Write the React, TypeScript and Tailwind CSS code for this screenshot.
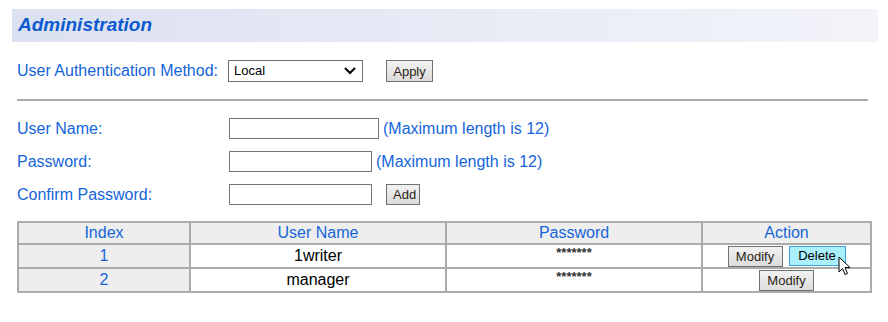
import React from 'react';

const users = [
  { index: 1, name: '1writer' },
  { index: 2, name: 'manager' },
];

const btn =
  'h-[21px] px-[6px] text-[13px] leading-none text-[#2a2416] bg-gradient-to-b from-[#f2f2f2] to-[#dcdcdc] border border-[#707070]';

const Cursor: React.FC = () => (
  <svg width="14" height="21" viewBox="0 0 14 21" className="absolute left-[49px] top-[10px]">
    <path
      d="M1 1 L1 16 L4.5 12.5 L7 18.5 L9.5 17.5 L7 11.5 L12 11.5 Z"
      fill="#fff"
      stroke="#000"
      strokeWidth="1"
      strokeLinejoin="round"
    />
  </svg>
);

const cell = 'border-r-2 border-b-2 border-[#ababab] p-0';

export default function App() {
  return (
    <div className="w-[888px] h-[322px] bg-white pt-[9px] font-['Liberation_Sans',Arial,sans-serif] text-[#1565d8]">
      <div className="ml-[12px] w-[866px] h-[33px] flex items-center pl-[6px] bg-gradient-to-r from-[#dce1f1] to-[#f3f4fa]">
        <h1 className="text-[19px] font-bold italic text-[#0b5ad0]">Administration</h1>
      </div>

      <div className="pl-[17px]">
        <div className="mt-[18px] flex items-center h-[22px]">
          <span className="w-[211px] text-[16px]">User Authentication Method:</span>
          <div className="relative w-[135px] h-[22px] border border-[#707070] flex items-center pl-[5px] text-[13px] text-black">
            Local
            <svg width="12" height="8" viewBox="0 0 12 8" className="absolute right-[6px] top-[6px]">
              <path d="M1 1 L6 6 L11 1" fill="none" stroke="#000" strokeWidth="2" />
            </svg>
          </div>
          <button className={`${btn} ml-[23px] w-[47px] h-[22px]`}>Apply</button>
        </div>

        <div className="mt-[17px] w-[851px] h-[2px] bg-[#ababab]" />

        <div className="mt-[17px] flex items-center h-[21px]">
          <span className="w-[212px] text-[16px]">User Name:</span>
          <div className="w-[150px] h-[21px] border border-[#767676]" />
          <span className="ml-[4px] text-[16px]">(Maximum length is 12)</span>
        </div>
        <div className="mt-[12px] flex items-center h-[21px]">
          <span className="w-[212px] text-[16px]">Password:</span>
          <div className="w-[143px] h-[21px] border border-[#767676]" />
          <span className="ml-[4px] text-[16px]">(Maximum length is 12)</span>
        </div>
        <div className="mt-[12px] flex items-center h-[21px]">
          <span className="w-[212px] text-[16px]">Confirm Password:</span>
          <div className="w-[143px] h-[21px] border border-[#767676]" />
          <button className={`${btn} ml-[14px] w-[34px]`}>Add</button>
        </div>

        <table className="mt-[16px] w-[855px] border-separate border-spacing-0 border-l-2 border-t-2 border-[#ababab] text-[16px] leading-[20px]">
          <thead>
            <tr className="bg-[#eeeeee]">
              <th className={`${cell} w-[172px] h-[22px] font-normal`}>Index</th>
              <th className={`${cell} w-[256px] font-normal`}>User Name</th>
              <th className={`${cell} w-[256px] font-normal`}>Password</th>
              <th className={`${cell} font-normal`}>Action</th>
            </tr>
          </thead>
          <tbody>
            {users.map((u) => (
              <tr key={u.index}>
                <td className={`${cell} h-[24px] text-center bg-[#eeeeee]`}>{u.index}</td>
                <td className={`${cell} text-center text-black`}>{u.name}</td>
                <td className={`${cell} text-center align-top text-[13px] leading-[16px] font-bold text-[#333]`}>
                  *******
                </td>
                <td className={cell}>
                  <div className="flex justify-center items-start gap-[6px]">
                    <button className={`${btn} w-[55px] h-[20px]`}>Modify</button>
                    {u.index === 1 && (
                      <div className="relative flex">
                        <button className="h-[20px] w-[57px] text-[13px] leading-none text-black bg-[#aaf0fd] border border-[#3d9fdc]">
                          Delete
                        </button>
                        <Cursor />
                      </div>
                    )}
                  </div>
                </td>
              </tr>
            ))}
          </tbody>
        </table>
      </div>
    </div>
  );
}
